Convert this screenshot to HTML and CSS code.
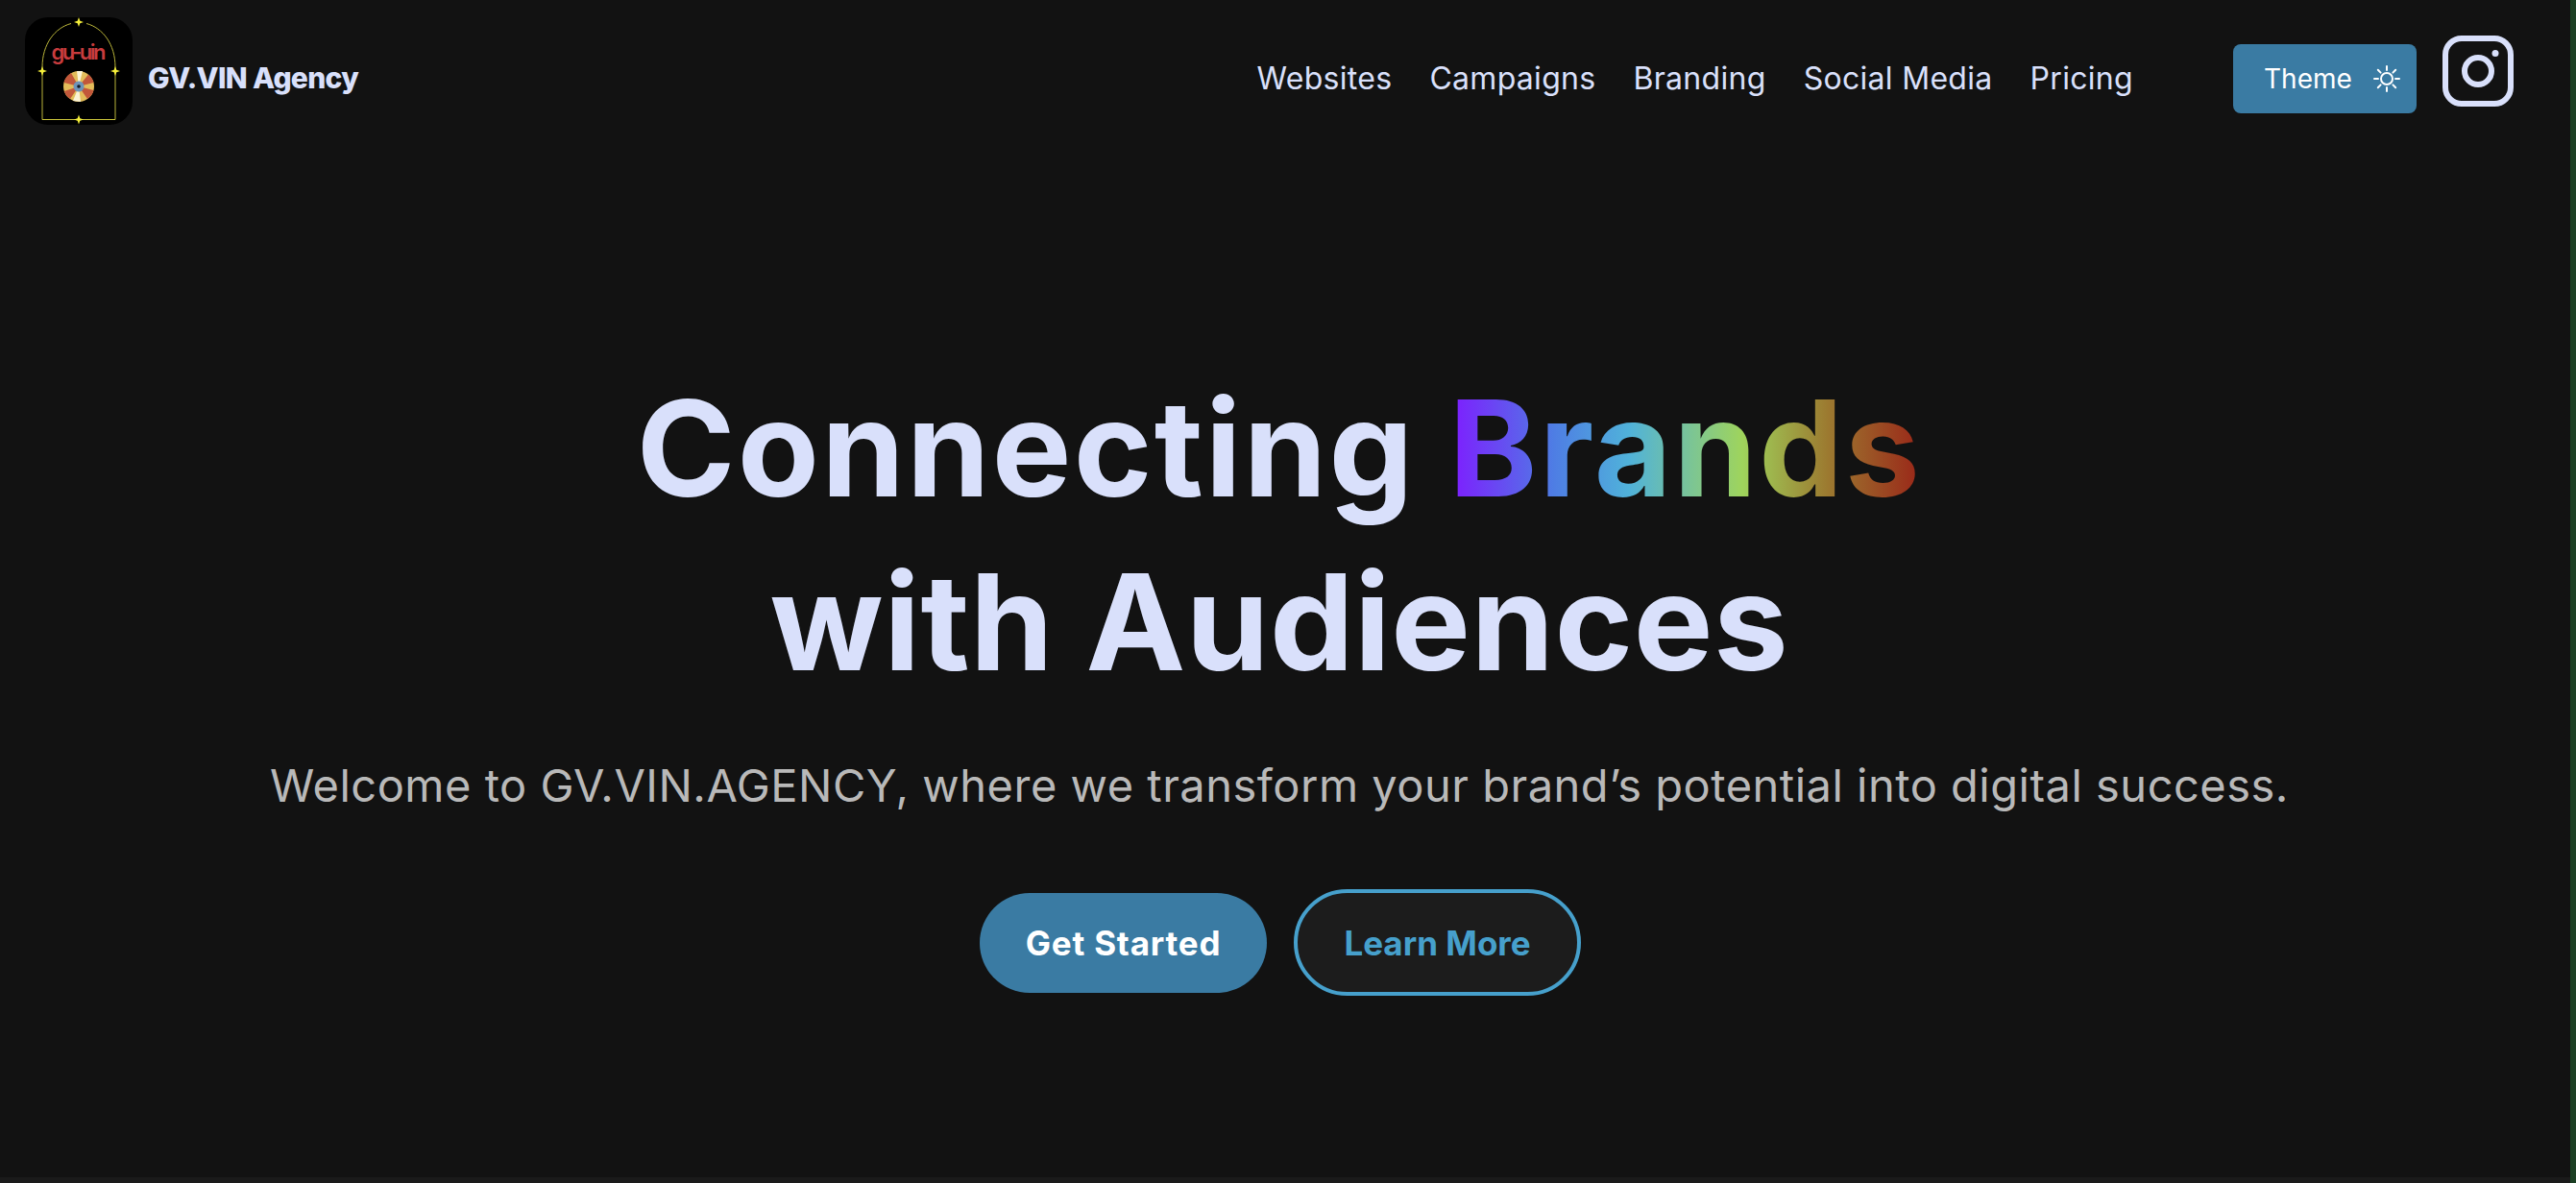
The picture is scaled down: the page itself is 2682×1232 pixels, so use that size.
FILE: index.html
```html
<!DOCTYPE html>
<html lang="en">
<head>
<meta charset="utf-8">
<title>GV.VIN Agency</title>
<link rel="stylesheet" href="styles.css">
</head>
<body>
<div class="page">
  <header class="header">
    <a class="brand" href="#">
      <svg class="logo" viewBox="0 0 112 112" aria-hidden="true">
        <rect width="112" height="112" rx="24" fill="#000"/>
        <path d="M18 106.500V52C18 28 31 11 48 6.500M94 106.500V52C94 28 81 11 64 6.500" fill="none" stroke="#b9b43a" stroke-width="1"/>
        <path d="M18 106.500H94" fill="none" stroke="#c9c23a" stroke-width="1"/>
        <g fill="#f4ee3a">
          <path d="M56 0l1.300 3.700 3.700 1.300-3.700 1.300-1.300 3.700-1.300-3.700-3.700-1.300 3.700-1.300z"/>
          <path d="M56 101.500l1.300 3.700 3.700 1.300-3.700 1.300-1.300 3.700-1.300-3.700-3.700-1.300 3.700-1.300z"/>
          <path d="M18 51l1.300 3.700 3.700 1.300-3.700 1.300-1.300 3.700-1.300-3.700-3.700-1.300 3.700-1.300z"/>
          <path d="M94 51l1.300 3.700 3.700 1.300-3.700 1.300-1.300 3.700-1.300-3.700-3.700-1.300 3.700-1.300z"/>
        </g>
        <text class="logo-text" x="27.500" y="44" textLength="57" lengthAdjust="spacing">gu-uin</text>
        <circle cx="56" cy="72" r="16" fill="#e3bc5a"/>
        <path d="M56 72L40.500 68A16 16 0 0 1 48 58ZM56 72L40.800 77A16 16 0 0 0 47 85ZM56 72L71.500 68A16 16 0 0 0 66 59.500ZM56 72L71.500 76A16 16 0 0 1 65 85Z" fill="#c2573a"/>
        <path d="M56 72L50 87L58 88ZM56 72L60 56L54 56Z" fill="#fbf3d6"/>
        <circle cx="56" cy="72" r="5.500" fill="#6e94b8"/>
        <circle cx="56" cy="72" r="1.800" fill="#101820"/>
      </svg>
      <span class="brand-name">GV.VIN Agency</span>
    </a>
    <div class="header-right">
      <nav class="nav">
        <a href="#">Websites</a>
        <a href="#">Campaigns</a>
        <a href="#">Branding</a>
        <a href="#">Social Media</a>
        <a href="#">Pricing</a>
      </nav>
      <button class="theme-btn" type="button">
        <span>Theme</span>
        <svg class="sun" viewBox="0 0 28 28" aria-hidden="true">
          <circle cx="14" cy="14" r="6"/>
          <path d="M14 1v4M14 23v4M1 14h4M23 14h4M4.800 4.800l2.800 2.800M20.400 20.400l2.800 2.800M4.800 23.200l2.800-2.800M20.400 7.600l2.800-2.800"/>
        </svg>
      </button>
      <a class="insta" href="#" aria-label="Instagram">
        <svg viewBox="0 0 74 74" aria-hidden="true">
          <rect x="3" y="3" width="68" height="68" rx="17" fill="none" stroke="#d9e0fb" stroke-width="6"/>
          <circle cx="37" cy="37" r="14" fill="none" stroke="#d9e0fb" stroke-width="6"/>
          <circle cx="55" cy="18.500" r="3.500" fill="#d9e0fb"/>
        </svg>
      </a>
    </div>
  </header>
  <main class="hero">
    <h1 class="title">
      <span class="line-one">Connecting <span class="gradient">Brands</span></span><br>
      <span class="line-two">with Audiences</span>
    </h1>
    <p class="lead">Welcome to GV.VIN.AGENCY, where we transform your brand’s potential into digital success.</p>
    <div class="actions">
      <a class="btn btn-primary" href="#">Get Started</a>
      <a class="btn btn-outline" href="#">Learn More</a>
    </div>
  </main>
</div>
</body>
</html>
```
FILE: styles.css
```css
* { box-sizing: border-box; }
html, body { margin: 0; height: 100%; }
body {
  background: #1c3f24;
  overflow: hidden;
  font-family: Inter, "Liberation Sans", sans-serif;
}
a { text-decoration: none; color: inherit; }
.page {
  width: 2676px;
  height: 1232px;
  background: #121212;
  border-bottom: 6px solid #1a1a1a;
  display: flex;
  flex-direction: column;
}
.header {
  display: flex;
  justify-content: space-between;
  align-items: flex-start;
  padding: 18px 59px 0 26px;
}
.brand { display: flex; align-items: center; gap: 16px; height: 112px; }
.logo { width: 112px; height: 112px; display: block; }
.logo-text { font: 600 22px Inter, sans-serif; fill: #c93c3e; }
.brand-name { font-size: 30px; font-weight: 800; color: #d9e0fb; letter-spacing: -0.7px; padding-top: 14px; }
.header-right { display: flex; align-items: flex-start; }
.nav {
  display: flex;
  gap: 39px;
  height: 112px;
  padding-top: 14px;
  align-items: center;
  margin-right: 104px;
  font-size: 32px;
  letter-spacing: 0.3px;
  color: #d9e0fb;
}
.theme-btn {
  width: 191px;
  height: 72px;
  margin-top: 28px;
  margin-right: 27px;
  padding: 0 17px 0 32px;
  display: flex;
  align-items: center;
  justify-content: space-between;
  background: #3a7ba3;
  border: 0;
  border-radius: 8px;
  color: #fff;
  font: 400 28px Inter, sans-serif;
}
.sun { width: 28px; height: 28px; fill: none; stroke: #fff; stroke-width: 2; stroke-linecap: round; }
.insta { display: block; width: 74px; height: 74px; margin-top: 19px; }
.insta svg { display: block; width: 74px; height: 74px; }
.hero {
  padding: 246px 12px 0 0;
  text-align: center;
}
.title {
  margin: 0;
  font-size: 139px;
  line-height: 181px;
  font-weight: 700;
  color: #d9e0fb;
}
.line-one { letter-spacing: 2.2px; }
.line-two { letter-spacing: 0.5px; }
.gradient {
  background: linear-gradient(90deg, #7f1cff 0%, #4e7de4 22%, #50b2da 38%, #9fd45c 62%, #9c7a30 80%, #9a2518 100%);
  -webkit-background-clip: text;
  background-clip: text;
  color: transparent;
}
.lead {
  margin: 50px 0 0;
  font-size: 47px;
  line-height: 60px;
  letter-spacing: 0.5px;
  color: #b9b9b9;
}
.actions {
  display: flex;
  justify-content: center;
  align-items: center;
  gap: 28px;
  margin-top: 78px;
  padding-left: 2px;
}
.btn {
  width: 299px;
  border-radius: 60px;
  font-size: 35px;
  font-weight: 700;
  display: flex;
  align-items: center;
  justify-content: center;
}
.btn-primary { height: 104px; background: #3a7ba3; color: #fff; letter-spacing: 0.8px; }
.btn-outline { height: 111px; background: #1c1c1c; color: #46a0cc; border: 4px solid #46a0cc; }
```
